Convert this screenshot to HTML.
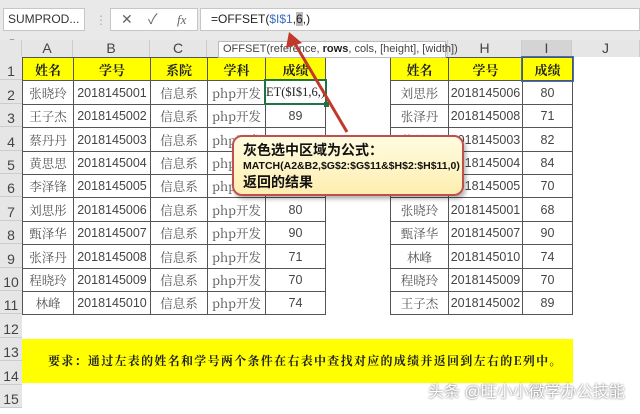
<!DOCTYPE html>
<html><head><meta charset="utf-8"><style>
*{margin:0;padding:0;box-sizing:border-box}
body{width:640px;height:408px;overflow:hidden;background:#fff;position:relative;font-family:"Liberation Sans","Noto Sans CJK SC",sans-serif;}
.a{position:absolute}
.c{position:absolute;display:flex;align-items:center;justify-content:center;font-size:12.5px;color:#444;white-space:nowrap;overflow:hidden}
.k{font-family:"Noto Serif CJK SC",serif;color:#555;font-size:12.5px}
.h{background:#ffff00;font-family:"Noto Serif CJK SC",serif;font-weight:bold;color:#222;font-size:13px}
.rh{position:absolute;left:0;width:22px;font-size:14px;color:#444;text-align:center;background:#e6e6e6}
.ch{position:absolute;top:40px;height:17px;font-size:14px;color:#444;text-align:center;line-height:17px;background:#e6e6e6;border-right:1px solid #ccc}
</style></head><body>
<div class="a" style="left:0;top:0;width:640px;height:40px;background:#e9e9e9"></div>
<div class="a" style="left:3px;top:8px;width:82px;height:23px;background:#fff;border:1px solid #c6c6c6;font-size:12px;line-height:21px;padding-left:4px;color:#333">SUMPROD... <span style="font-size:8px;color:#777">▼</span></div>
<div class="a" style="left:95px;top:13px;color:#aaa;font-size:12px">⋮</div>
<div class="a" style="left:110px;top:8px;width:88px;height:23px;background:#fff;border:1px solid #c6c6c6;font-size:14px;line-height:21px;color:#666"><span style="position:absolute;left:10px">✕</span><span style="position:absolute;left:37px">✓</span><span style="position:absolute;left:66px;font-family:'Liberation Serif',serif;font-style:italic;font-size:13px">fx</span></div>
<div class="a" style="left:200px;top:8px;width:440px;height:23px;background:#fff;border:1px solid #c6c6c6;font-size:12px;line-height:21px;padding-left:10px;color:#222">=OFFSET(<span style="color:#3b6bc4">$I$1</span>,<span style="background:#bbb">6</span>,)</div>
<div class="a" style="left:0;top:40px;width:640px;height:17px;background:#e6e6e6;border-bottom:1px solid #bbb"></div>
<div class="ch" style="left:0;width:22px"></div>
<div class="ch" style="left:22px;width:51px">A</div>
<div class="ch" style="left:73px;width:77px">B</div>
<div class="ch" style="left:150px;width:57px">C</div>
<div class="ch" style="left:207px;width:58px">D</div>
<div class="ch" style="left:265px;width:60px">E</div>
<div class="ch" style="left:325px;width:65px">F</div>
<div class="ch" style="left:390px;width:58px">G</div>
<div class="ch" style="left:448px;width:74px">H</div>
<div class="ch" style="left:522px;width:50px;background:#d4d4d4">I</div>
<div class="ch" style="left:572px;width:68px">J</div>
<div class="a" style="left:0;top:57px;width:22px;height:351px;background:#e6e6e6;border-right:1px solid #bbb"></div>
<div id="g"></div>
<script>
var L=[["张晓玲","2018145001","信息系","php开发",""],["王子杰","2018145002","信息系","php开发","89"],["蔡丹丹","2018145003","信息系","php开发","82"],["黄思思","2018145004","信息系","php开发","84"],["李泽锋","2018145005","信息系","php开发","70"],["刘思彤","2018145006","信息系","php开发","80"],["甄泽华","2018145007","信息系","php开发","90"],["张泽丹","2018145008","信息系","php开发","71"],["程晓玲","2018145009","信息系","php开发","70"],["林峰","2018145010","信息系","php开发","74"]];
var R=[["刘思彤","2018145006","80"],["张泽丹","2018145008","71"],["蔡丹丹","2018145003","82"],["黄思思","2018145004","84"],["李泽锋","2018145005","70"],["张晓玲","2018145001","68"],["甄泽华","2018145007","90"],["林峰","2018145010","74"],["程晓玲","2018145009","70"],["王子杰","2018145002","89"]];
var lx=[22,73,150,207,265,325],rx=[390,448,522,572];
var s="";function T(n){return Math.round(57+(n-1)*23.4);}
for(var n=1;n<=15;n++){var t=T(n),b=T(n+1);s+='<div class="rh" style="top:'+t+'px;height:'+(b-t)+'px;line-height:'+(b-t+6)+'px;border-bottom:1px solid #ccc">'+n+'</div>';}
var lh=["姓名","学号","系院","学科","成绩"],rh=["姓名","学号","成绩"];
function cell(x,w,t,h,txt,cls){return '<div class="c '+cls+'" style="left:'+x+'px;top:'+t+'px;width:'+(w+1)+'px;height:'+(h+1)+'px;border:1px solid #555">'+txt+'</div>';}
for(var i=0;i<5;i++)s+=cell(lx[i],lx[i+1]-lx[i],T(1),T(2)-T(1),lh[i],"h");
for(var i=0;i<3;i++)s+=cell(rx[i],rx[i+1]-rx[i],T(1),T(2)-T(1),rh[i],"h");
for(var r=0;r<10;r++){var t=T(r+2),h=T(r+3)-t;
for(var i=0;i<5;i++){var v=L[r][i];s+=cell(lx[i],lx[i+1]-lx[i],t,h,v,(i==0||i==2||i==3)?"k":"");}
for(var i=0;i<3;i++)s+=cell(rx[i],rx[i+1]-rx[i],t,h,R[r][i],i==0?"k":"");}
document.getElementById("g").innerHTML=s;
</script>
<div class="a" style="left:264px;top:79px;width:63px;height:26px;border:2px solid #217346;background:#fff;font-family:'Liberation Serif',serif;font-size:12.5px;line-height:22px;overflow:hidden;white-space:nowrap;color:#222;direction:rtl;text-align:left;padding-left:1px"><span style="direction:ltr;unicode-bidi:bidi-override">ET($I$1,6,)</span></div>
<div class="a" style="left:324px;top:102px;width:5px;height:5px;background:#217346"></div>
<div class="a" style="left:521px;top:56px;width:53px;height:26px;border:1px solid #3d6fd0"></div>
<div class="a" style="left:218px;top:41px;width:228px;height:17px;background:#fff;border:1px solid #bbb;font-size:11px;line-height:15px;padding-left:4px;color:#444;white-space:nowrap">OFFSET(reference, <b style="color:#222">rows</b>, cols, [height], [width])</div>
<div class="a" style="left:22px;top:339px;width:551px;height:44px;background:#ffff00"></div>
<div class="a" style="left:48px;top:352px;font-family:'Noto Serif CJK SC',serif;font-weight:bold;font-size:12px;letter-spacing:1.3px;color:#222;white-space:nowrap">要求：通过左表的姓名和学号两个条件在右表中查找对应的成绩并返回到左右的E列中。</div>
<div class="a" style="left:428px;top:378px;font-size:16px;color:#fff;text-shadow:0 0 2px #555;white-space:nowrap">头条 @旺小小微学办公技能</div>
<svg class="a" style="left:0;top:0" width="640" height="408"><line x1="347" y1="132" x2="294" y2="42" stroke="#c0392b" stroke-width="3"/><polygon points="289,32 286,48 302,43" fill="#c0392b"/></svg>
<div class="a" style="left:232px;top:135px;width:232px;height:61px;border:2px solid #c0504d;border-radius:10px;background:linear-gradient(#fffbe0,#fdeeb0);box-shadow:2px 3px 4px rgba(0,0,0,.3);padding:4px 0 0 9px;font-weight:bold;color:#111;white-space:nowrap">
<div style="font-size:14px;line-height:18px;font-family:'Noto Sans CJK SC',sans-serif">灰色选中区域为公式：</div>
<div style="font-size:10.5px;line-height:14px">MATCH(A2&amp;B2,$G$2:$G$11&amp;$H$2:$H$11,0)</div>
<div style="font-size:14px;line-height:18px;font-family:'Noto Sans CJK SC',sans-serif">返回的结果</div>
</div>
</body></html>
